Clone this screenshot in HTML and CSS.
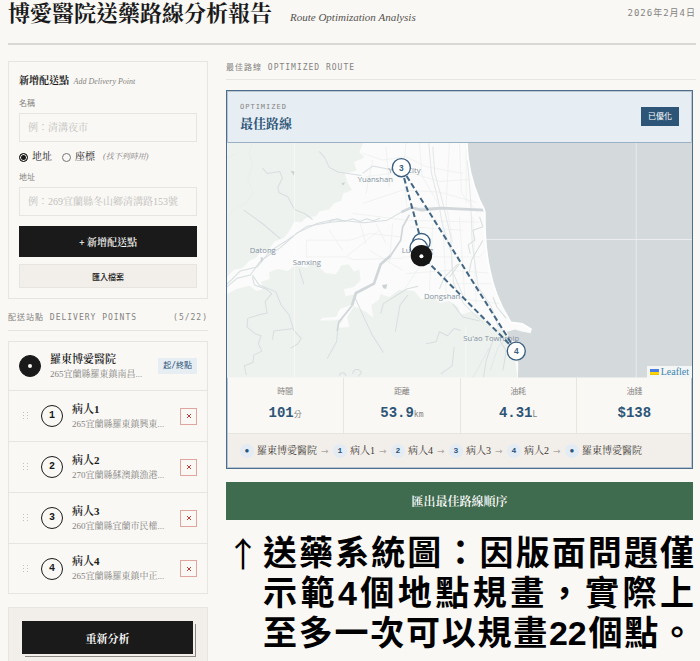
FILE: index.html
```html
<!DOCTYPE html>
<html lang="zh-Hant">
<head>
<meta charset="utf-8">
<meta name="viewport" content="width=device-width, initial-scale=1">
<title>博愛醫院送藥路線分析報告</title>
<link rel="stylesheet" href="styles.css">
</head>
<body>
<div class="page">
  <header class="masthead">
    <h1>博愛醫院送藥路線分析報告</h1>
    <p class="subtitle">Route Optimization Analysis</p>
    <time class="date" datetime="2026-02-04">2026年2月4日</time>
  </header>

  <div class="columns">
    <aside class="sidebar">
      <form class="card add-form">
        <h2>新增配送點 <em>Add Delivery Point</em></h2>
        <label class="field-label" for="name">名稱</label>
        <input class="field" id="name" type="text" placeholder="例：清溝夜市">
        <div class="modes">
          <label><input type="radio" name="mode" checked>地址</label>
          <label><input type="radio" name="mode">座標 <em>(找不到時用)</em></label>
        </div>
        <label class="field-label" for="address">地址</label>
        <input class="field" id="address" type="text" placeholder="例：269宜蘭縣冬山鄉清溝路153號">
        <button class="btn-dark" type="button">+ 新增配送點</button>
        <button class="btn-light" type="button">匯入檔案</button>
      </form>

      <h2 class="section-label"><span>配送站點 DELIVERY POINTS</span><span>(5/22)</span></h2>
      <ul class="card stops">
        <li class="stop depot">
          <span class="num filled"></span>
          <div class="info"><strong>羅東博愛醫院</strong><span>265宜蘭縣羅東鎮南昌...</span></div>
          <span class="tag">起/終點</span>
        </li>
        <li class="stop">
          <svg class="grip" viewBox="0 0 6 8"><path d="M0 0h1v1H0zM4 0h1v1H4zM0 3h1v1H0zM4 3h1v1H4zM0 6h1v1H0zM4 6h1v1H4z"/></svg>
          <span class="num">1</span>
          <div class="info"><strong>病人1</strong><span>265宜蘭縣羅東鎮興東...</span></div>
          <button class="remove" type="button" aria-label="刪除"><svg viewBox="0 0 6 6"><path d="M1 1l4 4M5 1l-4 4"/></svg></button>
        </li>
        <li class="stop">
          <svg class="grip" viewBox="0 0 6 8"><path d="M0 0h1v1H0zM4 0h1v1H4zM0 3h1v1H0zM4 3h1v1H4zM0 6h1v1H0zM4 6h1v1H4z"/></svg>
          <span class="num">2</span>
          <div class="info"><strong>病人2</strong><span>270宜蘭縣蘇澳鎮漁港...</span></div>
          <button class="remove" type="button" aria-label="刪除"><svg viewBox="0 0 6 6"><path d="M1 1l4 4M5 1l-4 4"/></svg></button>
        </li>
        <li class="stop">
          <svg class="grip" viewBox="0 0 6 8"><path d="M0 0h1v1H0zM4 0h1v1H4zM0 3h1v1H0zM4 3h1v1H4zM0 6h1v1H0zM4 6h1v1H4z"/></svg>
          <span class="num">3</span>
          <div class="info"><strong>病人3</strong><span>260宜蘭縣宜蘭市民權...</span></div>
          <button class="remove" type="button" aria-label="刪除"><svg viewBox="0 0 6 6"><path d="M1 1l4 4M5 1l-4 4"/></svg></button>
        </li>
        <li class="stop">
          <svg class="grip" viewBox="0 0 6 8"><path d="M0 0h1v1H0zM4 0h1v1H4zM0 3h1v1H0zM4 3h1v1H4zM0 6h1v1H0zM4 6h1v1H4z"/></svg>
          <span class="num">4</span>
          <div class="info"><strong>病人4</strong><span>265宜蘭縣羅東鎮中正...</span></div>
          <button class="remove" type="button" aria-label="刪除"><svg viewBox="0 0 6 6"><path d="M1 1l4 4M5 1l-4 4"/></svg></button>
        </li>
      </ul>

      <div class="analyze"><button type="button">重新分析</button></div>
    </aside>

    <main class="content">
      <h2 class="section-label"><span>最佳路線 OPTIMIZED ROUTE</span></h2>
      <section class="route">
        <header class="route-head">
          <div>
            <p class="eyebrow">OPTIMIZED</p>
            <h3>最佳路線</h3>
          </div>
          <span class="badge">已優化</span>
        </header>

        <div class="map">
          <svg class="map-canvas" viewBox="24 9 1392 702" role="img" aria-label="路線地圖">
            <rect class="land" x="24" y="9" width="1392" height="702"/>
            <path class="forest" d="M24 9H432L420 36 436 52 404 66 412 92 376 100 386 128 398 150 372 160 366 182 344 190 330 208 300 214 290 228 262 232 246 246 226 244 212 270 196 292 166 304 150 326 128 330 112 352 90 362 70 384 46 388 24 410Z"/>
            <path class="forest" d="M24 462L52 446 92 436 112 452 134 446 126 424 152 416 150 396 176 386 206 392 226 376 262 382 280 368 300 380 318 398 350 402 366 376 388 372 404 394 420 388 424 420 404 440 374 446 378 468 408 462 402 492 362 506 350 530 312 532 300 540 340 540 372 536 356 562 390 560 384 530 404 498 440 514 462 532 456 494 478 478 484 462 510 470 540 448 584 452 606 478 640 470 662 488 690 482 716 500 722 524 752 514 790 530 812 560 850 566 870 600 884 640 893 711H24Z"/>
            <g class="streets">
              <path d="M430 40l60 20 70-10 60 30 110 20M440 110l120-16 100 30 90-6M560 9l-8 70 10 120M600 9l8 100 60 100M690 9l-10 180 20 120M720 9l6 150 50 60M430 190l120-40 110 6 110 30M460 60l-20 100M500 20l10 120M400 220l160 20 220 6M262 300h130l60-20 90 10M262 300v50h120l20 8 150-4M330 270l40 60M420 240l20 70M470 250l30 60M380 350l100-80M550 350h230l20-20M570 260l160 10M560 400l130-10 116 8M640 250l-10 200M670 240l10 220M720 230l16 240M760 230l10 260M600 380l-60 90M700 430h120M690 470l150 20M740 9v180M450 330l100 60M520 250l-10 120"/>
            </g>
            <g class="motorway">
              <path d="M628 9l8 90 20 80 12 70 28 90 6 90 30 60 60 60"/>
              <path d="M640 20l6 80 22 80 26 110 4 100 34 80M744 60l10 130 4 120 18 130 40 60 20 60M812 690l24-70 36-40M760 711l50-90"/>
            </g>
            <g class="rivers">
              <path d="M24 440l30-26 40-10 30-42 60-40 50-44 60-28 50-12 90 10 70-8 60-34 100-4"/>
              <path d="M24 432l40-40 50-12 40-48 44-28 66-46 70-12 50-4M330 244l24-8 22 8 24-8 22 8 20-8 20 6 20-8M100 404l20 30 50 20 16 40 24 30 14 46 22 24-10 16-22 14M100 410l6 24 34 12 18 14-20 24 6 34-26 6-32 10-2 26 24 20 18 6-8 24 10 22-24 12-2 22-26 10 6 28"/>
              <path d="M224 564l-60 8-4 26M300 34l16 18 14 30 26 14 70 10M130 84l14 16 38-6 8 20-14 28 4 16 26 12 20 38 30 12 24 18M430 100l30-22 60 12M74 210l56 40 54 46M408 474l30 66 20 42 34 54M356 560l-4 44-28 50M528 574l14-80 24-30M484 520l8-30 70-44 34-8M620 610l30-6 10-30 24 12 20-22 20 6M664 700l34-24 6-56M240 386l14 46M360 706c4-14 18-10 20 0M400 700c2-18 24-16 26-2l-10 10M690 410l30-40M660 446l14-34 40-40M780 230l10 30-30 10 6 30-20 14 6 26M790 300l-34 60-10 50M820 470l12 30 28 34M700 490l30 40 50 12M820 600l-20 60-8 50M840 600l20 30-10 60"/>
            </g>
            <g class="wide-river">
              <path d="M546 216l30-14 30 8 60-6 130 6"/>
              <path d="M514 346L484 372 464 430 410 458 398 496"/>
              <path class="tail" d="M570 224L550 260 544 300 514 346M398 496l-40 50-4 26"/>
            </g>
            <path class="trail" d="M98 12l-8 30 10 36-14 40 16 40-20 30-40 20-12 20M24 54l30-14"/>
            <path class="sea" d="M742 9C744 70 754 120 780 180L792 204 796 216C795 290 800 340 810 386 820 440 844 500 874 546L908 550 934 566 930 578 906 573 886 567 862 574 868 592 884 604 890 640 896 670 895 711H1416V9Z"/>
            <path class="coast" d="M742 9C744 70 754 120 780 180L792 204 796 216C795 290 800 340 810 386 820 440 844 500 874 546L908 550 934 566 930 578"/>
            <path class="tiles" d="M226 9V711M739 560V711M1249 9V711M798 298H1416"/>
            <path class="peaks" d="M214 92l12 2-2 12zM366 130l12-4-6 10zM488 434l16-2-4 14-8-2zM124 352l8 0-4 16z"/>
            <g class="places">
              <text x="468" y="126">Yuanshan</text>
              <text x="555" y="99">Yilan City</text>
              <text x="131" y="339">Datong</text>
              <text x="263" y="375">Sanxing</text>
              <text x="594" y="339">Luodong</text>
              <text x="668" y="475">Dongshan</text>
              <text x="815" y="602">Su'ao Township</text>
            </g>
            <path class="route-line" d="M606 306L546 83 890 632 606 346"/>
            <g class="pins">
              <circle cx="606" cy="306" r="26"/>
              <circle cx="598" cy="322" r="26"/>
              <circle cx="546" cy="83" r="27"/>
              <circle cx="890" cy="632" r="27"/>
              <text x="546" y="92">3</text>
              <text x="890" y="641">4</text>
            </g>
            <circle class="pin-depot" cx="606" cy="346" r="32"/>
            <circle class="pin-dot" cx="606" cy="348" r="6"/>
          </svg>
          <a class="attribution" href="#"><svg viewBox="0 0 12 8"><path fill="#4c7be1" d="M0 0h12v4H0z"/><path fill="#ffd500" d="M0 4h12v4H0z"/><path fill="#e0bc00" d="M0 7h12v1H0z"/></svg>Leaflet</a>
        </div>

        <dl class="stats">
          <div><dt>時間</dt><dd>101<small>分</small></dd></div>
          <div><dt>距離</dt><dd>53.9<small>km</small></dd></div>
          <div><dt>油耗</dt><dd>4.31<small>L</small></dd></div>
          <div><dt>油錢</dt><dd>$138</dd></div>
        </dl>

        <ol class="sequence">
          <li><i>●</i>羅東博愛醫院</li>
          <li><i>1</i>病人1</li>
          <li><i>2</i>病人4</li>
          <li><i>3</i>病人3</li>
          <li><i>4</i>病人2</li>
          <li><i>●</i>羅東博愛醫院</li>
        </ol>
      </section>

      <button class="export" type="button">匯出最佳路線順序</button>

      <div class="caption">
        <span class="arrow">↑</span>
        <p>送藥系統圖：因版面問題僅<br>示範4個地點規畫，實際上<br>至多一次可以規畫22個點。</p>
      </div>
    </main>
  </div>
</div>
</body>
</html>
```
FILE: styles.css
```css
:root {
  --paper: #f9f8f5;
  --cream: #f2eee9;
  --line: #e7e5e0;
  --ink: #1a1a1a;
  --muted: #85837f;
  --blue: #2c5578;
  --pale-blue: #e6edf3;
  --serif: "Liberation Serif", "Noto Serif CJK TC", "Noto Sans CJK TC", serif;
  --mono: "Liberation Mono", "Noto Sans CJK TC", monospace;
  --label: "DejaVu Sans Mono", "Noto Sans CJK TC", monospace;
  --sans: "Liberation Sans", "Noto Sans CJK TC", sans-serif;
}

* { box-sizing: border-box; }

body, h1, h2, h3, p, ul, ol, dl, dd { margin: 0; }
ul, ol { padding: 0; list-style: none; }

body {
  background: var(--paper);
  color: var(--ink);
  font-family: var(--serif);
  font-size: 10px;
  line-height: 14px;
}

button, input { font-family: inherit; border-radius: 0; }
button { display: block; padding: 0; border: 0; cursor: pointer; }

.page { padding: 0 4px 0 8px; }

.masthead {
  display: flex;
  align-items: baseline;
  gap: 18px;
  height: 45px;
  border-bottom: 2px solid #dad8d4;
}
.masthead h1 { font-size: 22px; line-height: 28px; font-weight: 700; }
.subtitle { color: #55524e; font-size: 11px; font-style: italic; }
.date {
  align-self: flex-start;
  margin: 6px 0 0 auto;
  color: var(--muted);
  font-family: var(--label);
  font-size: 9px;
  letter-spacing: 1px;
}

.columns {
  display: grid;
  grid-template-columns: 200px 1fr;
  gap: 18px;
  padding-top: 16px;
}

.card { border: 1px solid var(--line); }

.add-form { padding: 11px 10px 10px; }
.add-form h2 { font-size: 10px; line-height: 16px; }
.add-form h2 em { margin-left: 2px; color: var(--muted); font-size: 8px; font-weight: 400; }
.field-label {
  display: block;
  margin-top: 8px;
  color: var(--muted);
  font-family: var(--label);
  font-size: 8px;
  line-height: 12px;
}
.field {
  display: block;
  width: 100%;
  height: 29px;
  margin-top: 3px;
  padding: 0 8px;
  border: 1px solid var(--line);
  background: transparent;
  color: var(--ink);
  font-size: 10px;
}
.field::placeholder { color: #c2c0bc; opacity: 1; }
.modes { display: flex; gap: 10px; margin-top: 8px; }
.modes label { display: flex; align-items: center; }
.modes input {
  appearance: none;
  width: 9px;
  height: 9px;
  margin: 0 4px 0 0;
  border: 1px solid #777;
  border-radius: 50%;
}
.modes input:checked {
  border-color: var(--ink);
  background: var(--ink);
  box-shadow: inset 0 0 0 1px var(--paper);
}
.modes em { margin-left: 8px; color: var(--muted); font-size: 8px; }
.btn-dark {
  width: 100%;
  height: 31px;
  margin-top: 10px;
  background: var(--ink);
  color: var(--paper);
  font-size: 10px;
  font-weight: 600;
}
.btn-light {
  width: 100%;
  height: 24px;
  margin-top: 7px;
  border: 1px solid var(--line);
  background: var(--cream);
  color: var(--ink);
  font-family: var(--sans);
  font-size: 8px;
  font-weight: 500;
}

.section-label {
  display: flex;
  justify-content: space-between;
  padding-bottom: 5px;
  border-bottom: 1px solid var(--line);
  color: var(--muted);
  font-family: var(--label);
  font-size: 8px;
  font-weight: 400;
  letter-spacing: 1px;
}
.sidebar .section-label { margin: 12px 0 10px; }

.stop {
  display: flex;
  align-items: center;
  height: 51px;
  padding: 0 10px;
  border-bottom: 1px solid var(--line);
}
.stop.depot { height: 49px; }
.stop:last-child { height: 49px; border-bottom: 0; }
.grip { width: 6px; height: 8px; margin: 0 12px 0 4px; fill: #c4c2be; }
.num {
  display: grid;
  flex: none;
  place-items: center;
  width: 22px;
  height: 22px;
  margin-right: 9px;
  border: 1px solid var(--ink);
  border-radius: 50%;
  font-family: var(--mono);
  font-weight: 700;
}
.num.filled { background: var(--ink); }
.num.filled::before {
  width: 4px;
  height: 4px;
  border-radius: 50%;
  background: var(--paper);
  content: "";
}
.info { flex: 1; min-width: 0; }
.info strong { display: block; font-size: 11px; font-weight: 600; line-height: 15px; }
.info span {
  display: block;
  overflow: hidden;
  color: var(--muted);
  font-size: 9px;
  text-overflow: ellipsis;
  white-space: nowrap;
}
.tag {
  margin-left: 8px;
  padding: 0 5px;
  background: var(--pale-blue);
  color: var(--blue);
  font-family: var(--label);
  font-size: 8px;
  line-height: 16px;
}
.remove {
  display: grid;
  flex: none;
  place-items: center;
  width: 17px;
  height: 17px;
  margin-left: 8px;
  border: 1px solid #dfa59f;
  background: transparent;
}
.remove svg { width: 6px; height: 6px; fill: none; stroke: #b5413a; }

.analyze {
  margin-top: 13px;
  padding: 13px 13px 7px;
  border: 1px solid var(--line);
  border-bottom: 0;
  background: var(--cream);
}
.analyze button {
  width: calc(100% - 1px);
  height: 33px;
  background: var(--ink);
  box-shadow: 2px 2px 0 var(--cream), 3px 3px 0 #8b8985;
  color: var(--paper);
  font-size: 11px;
  font-weight: 700;
}

.route {
  margin: 10px 3px 0 0;
  border: 1px solid #4c6d8c;
  outline: 1px solid #b9c6d2;
  outline-offset: -2px;
}
.content .section-label { padding-bottom: 4px; }
.route-head {
  display: flex;
  align-items: center;
  justify-content: space-between;
  height: 52px;
  padding: 0 13px;
  border-bottom: 1px solid #9cb0c4;
  background: var(--pale-blue);
}
.eyebrow { color: var(--muted); font-family: var(--label); font-size: 7px; letter-spacing: 1px; }
.route-head h3 { color: var(--blue); font-size: 13px; line-height: 20px; }
.badge {
  padding: 0 7px;
  background: var(--blue);
  color: #fff;
  font-family: var(--sans);
  font-size: 8px;
  line-height: 19px;
}

.map { position: relative; }
.map-canvas { display: block; width: 100%; }
.land { fill: #fafbfa; }
.forest { fill: #edf2ee; }
.sea { fill: #d4d9dc; }
.coast { fill: none; stroke: #fff; stroke-width: 5; }
.streets { fill: none; stroke: #eceeed; stroke-width: 2; }
.motorway { fill: none; stroke: #e4e7e8; stroke-width: 3; }
.rivers { fill: none; stroke: #d8dee0; stroke-width: 3; stroke-linejoin: round; }
.wide-river { fill: none; stroke: #d0d6d9; stroke-width: 8; stroke-linejoin: round; }
.wide-river .tail { stroke-width: 5; }
.trail { fill: none; stroke: #ecd6d2; stroke-width: 2; stroke-dasharray: 2 6; }
.tiles { fill: none; stroke: #fff; stroke-opacity: .5; stroke-width: 3; }
.peaks { fill: #ccd2d3; }
.places { fill: #8593a3; font: 500 23px "Open Sans", sans-serif; text-anchor: middle; }
.route-line { fill: none; stroke: #426684; stroke-width: 6; stroke-dasharray: 17 9; }
.pins circle { fill: #fff; stroke: #3b5f80; stroke-width: 4; }
.pins text { fill: #3b5f80; font: 700 25px "Liberation Sans", sans-serif; text-anchor: middle; }
.pin-depot { fill: #161616; }
.pin-dot { fill: #fff; }
.attribution {
  display: flex;
  position: absolute;
  right: 0;
  bottom: 0;
  align-items: center;
  gap: 2px;
  padding: 0 3px;
  background: #f4f5f5;
  color: #3c86ad;
  font-size: 10px;
  line-height: 12px;
  text-decoration: none;
}
.attribution svg { width: 9px; height: 6px; }

.stats {
  display: grid;
  grid-template-columns: repeat(4, 1fr);
  border-bottom: 1px solid var(--line);
  text-align: center;
}
.stats div { padding: 7px 0 9px; }
.stats div + div { border-left: 1px solid var(--line); }
.stats dt { color: var(--muted); font-family: var(--label); font-size: 8px; line-height: 14px; }
.stats dd {
  margin-top: 5px;
  color: var(--blue);
  font: 700 14px/18px var(--mono);
}
.stats small { color: var(--muted); font-family: var(--label); font-size: 8px; font-weight: 400; }

.sequence {
  display: flex;
  flex-wrap: wrap;
  align-items: center;
  padding: 10px 13px;
  background: var(--cream);
  color: #3d3a37;
}
.sequence li { display: flex; align-items: center; }
.sequence li + li::before {
  width: 8px;
  margin: 0 4px;
  color: #aaa7a2;
  font-family: "DejaVu Sans", sans-serif;
  font-size: 9px;
  content: "→";
}
.sequence i {
  width: 14px;
  height: 14px;
  margin-right: 3px;
  border-radius: 50%;
  background: #e3ecf5;
  color: var(--blue);
  font: 700 8px/14px var(--mono);
  text-align: center;
}

.export {
  width: calc(100% - 3px);
  height: 38px;
  margin-top: 13px;
  background: #3f6b4f;
  color: #fff;
  font-size: 12px;
  font-weight: 600;
}

.caption {
  display: flex;
  margin-top: 13px;
  padding-right: 2px;
  color: #000;
  font: 700 34px/40px var(--sans);
}
.arrow { width: 37px; font-family: "Noto Sans CJK TC", sans-serif; font-weight: 400; }
.caption p { flex: 1; text-align: justify; text-align-last: justify; }
```
